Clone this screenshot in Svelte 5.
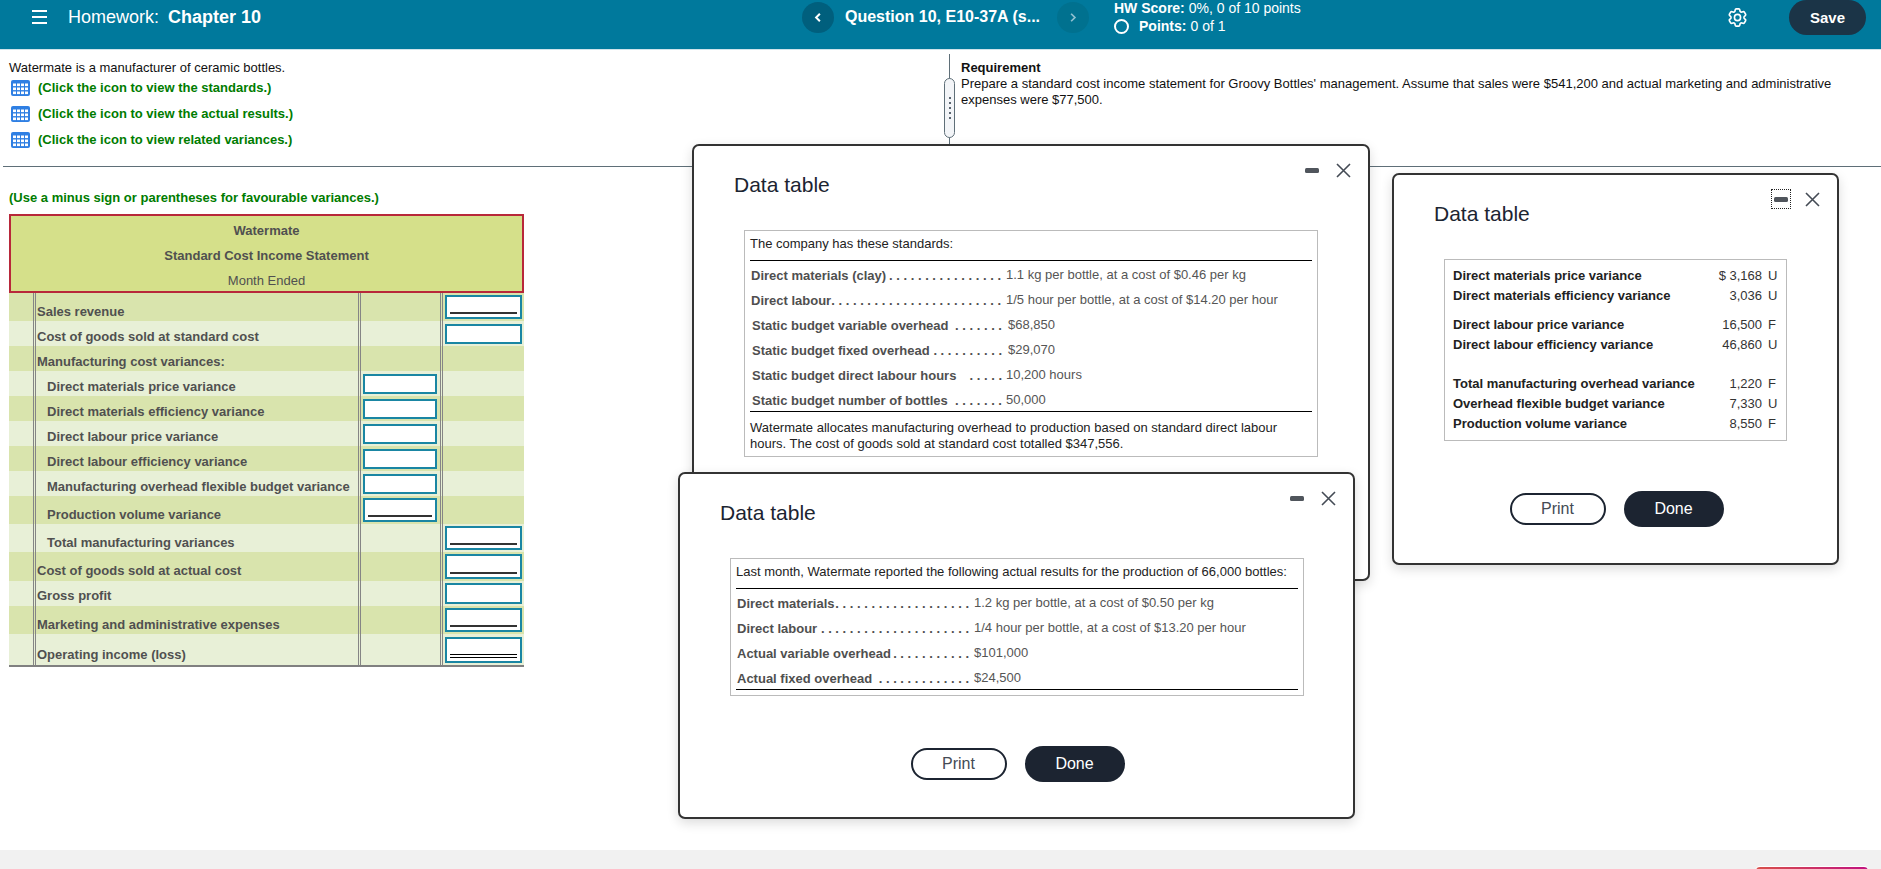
<script>
  const dots = (n) => '. '.repeat(n).trim();

  const rows = [
    { label: 'Sales revenue', h: 'h28', c4: 'i24' },
    { label: 'Cost of goods sold at standard cost', h: 'h25', c4: 'i20' },
    { label: 'Manufacturing cost variances:', h: 'h25' },
    { label: 'Direct materials price variance', h: 'h25', ind: true, c3: 'i20' },
    { label: 'Direct materials efficiency variance', h: 'h25', ind: true, c3: 'i20' },
    { label: 'Direct labour price variance', h: 'h25', ind: true, c3: 'i20' },
    { label: 'Direct labour efficiency variance', h: 'h25', ind: true, c3: 'i20' },
    { label: 'Manufacturing overhead flexible budget variance', h: 'h25', ind: true, c3: 'i20' },
    { label: 'Production volume variance', h: 'h28', ind: true, c3: 'i24' },
    { label: 'Total manufacturing variances', h: 'h28', ind: true, c4: 'i24' },
    { label: 'Cost of goods sold at actual cost', h: 'h29', c4: 'i25' },
    { label: 'Gross profit', h: 'h25', c4: 'i21' },
    { label: 'Marketing and administrative expenses', h: 'h28', c4: 'i24' },
    { label: 'Operating income (loss)', h: 'h31', c4: 'i26' }
  ];

  const standards = [
    ['Direct materials (clay)', 16, '1.1 kg per bottle, at a cost of $0.46 per kg'],
    ['Direct labour', 24, '1/5 hour per bottle, at a cost of $14.20 per hour'],
    ['Static budget variable overhead', 7, '$68,850'],
    ['Static budget fixed overhead', 10, '$29,070'],
    ['Static budget direct labour hours', 5, '10,200 hours'],
    ['Static budget number of bottles', 7, '50,000']
  ];

  const actuals = [
    ['Direct materials', 19, '1.2 kg per bottle, at a cost of $0.50 per kg'],
    ['Direct labour', 21, '1/4 hour per bottle, at a cost of $13.20 per hour'],
    ['Actual variable overhead', 11, '$101,000'],
    ['Actual fixed overhead', 13, '$24,500']
  ];

  const variances = [
    { cls: 'g1', items: [['Direct materials price variance', '$ 3,168', 'U'], ['Direct materials efficiency variance', '3,036', 'U']] },
    { cls: 'g2', items: [['Direct labour price variance', '16,500', 'F'], ['Direct labour efficiency variance', '46,860', 'U']] },
    { cls: 'g3', items: [['Total manufacturing overhead variance', '1,220', 'F'], ['Overhead flexible budget variance', '7,330', 'U'], ['Production volume variance', '8,550', 'F']] }
  ];

  const links = [
    '(Click the icon to view the standards.)',
    '(Click the icon to view the actual results.)',
    '(Click the icon to view related variances.)'
  ];
</script>

{#snippet gridIcon()}
  <svg class="gicon" viewBox="0 0 19 16" aria-hidden="true">
    <rect width="19" height="16" rx="2" fill="#2f7fe3" />
    {#each [3.5, 7.5, 11.5] as y}
      {#each [2, 6, 10, 14] as x}
        <rect {x} {y} width="3" height="2.6" fill="#fff" />
      {/each}
    {/each}
  </svg>
{/snippet}

{#snippet ctl(focus)}
  <div class="ctl">
    <span class="min" class:focus><span class="bar"></span></span>
    <svg class="x" viewBox="0 0 15 15" aria-hidden="true">
      <path d="M1 1l13 13M14 1L1 14" fill="none" stroke="#444b55" stroke-width="1.6" />
    </svg>
  </div>
{/snippet}

{#snippet buttons()}
  <div class="btns">
    <button class="print">Print</button>
    <button class="done">Done</button>
  </div>
{/snippet}

{#snippet leaders(list)}
  <div class="rows">
    {#each list as [label, n, value]}
      <div class="lrow">
        <div class="lead"><b>{label}</b><b class="dots">{dots(n)}</b></div>
        <span class="val">{value}</span>
      </div>
    {/each}
  </div>
{/snippet}

<div class="page">
  <header>
    <div class="burger"><i></i><i></i><i></i></div>
    <div class="title">Homework: <b>Chapter 10</b></div>
    <button class="nav prev" aria-label="Previous">
      <svg viewBox="0 0 8 12"><path d="M5.5 3L2.5 6l3 3" fill="none" stroke="#fff" stroke-width="1.6" /></svg>
    </button>
    <div class="q">Question 10, E10-37A (s...</div>
    <button class="nav next" aria-label="Next">
      <svg viewBox="0 0 8 12"><path d="M2.5 3l3 3-3 3" fill="none" stroke="#8fc0d0" stroke-width="1.4" /></svg>
    </button>
    <div class="score">
      <div><b>HW Score:</b> 0%, 0 of 10 points</div>
      <div class="pts"><span class="ring"></span><b>Points:</b> 0 of 1</div>
    </div>
    <svg class="gear" viewBox="0 0 24 24" aria-hidden="true">
      <path d="M9.594 3.94c.09-.542.56-.94 1.11-.94h2.593c.55 0 1.02.398 1.11.94l.213 1.281c.063.374.313.686.645.87.074.04.147.083.22.127.325.196.72.257 1.075.124l1.217-.456a1.125 1.125 0 0 1 1.37.49l1.296 2.247a1.125 1.125 0 0 1-.26 1.431l-1.003.827c-.293.241-.438.613-.43.992a7.723 7.723 0 0 1 0 .255c-.008.378.137.75.43.991l1.004.827c.424.35.534.955.26 1.43l-1.298 2.247a1.125 1.125 0 0 1-1.369.491l-1.217-.456c-.355-.133-.75-.072-1.076.124a6.47 6.47 0 0 1-.22.128c-.331.183-.581.495-.644.869l-.213 1.281c-.09.543-.56.94-1.11.94h-2.594c-.55 0-1.019-.398-1.11-.94l-.213-1.281c-.062-.374-.312-.686-.644-.87a6.52 6.52 0 0 1-.22-.127c-.325-.196-.72-.257-1.076-.124l-1.217.456a1.125 1.125 0 0 1-1.369-.49l-1.297-2.247a1.125 1.125 0 0 1 .26-1.431l1.004-.827c.292-.24.437-.613.43-.991a6.932 6.932 0 0 1 0-.255c.007-.38-.138-.751-.43-.992l-1.004-.827a1.125 1.125 0 0 1-.26-1.43l1.297-2.247a1.125 1.125 0 0 1 1.37-.491l1.216.456c.356.133.751.072 1.076-.124.072-.044.146-.086.22-.128.332-.183.582-.495.644-.869l.214-1.28Z" fill="none" stroke="#fff" stroke-width="1.7" />
      <circle cx="12" cy="12" r="3.2" fill="none" stroke="#fff" stroke-width="1.7" />
    </svg>
    <button class="save">Save</button>
  </header>

  <section class="top">
    <div class="left">
      <p class="intro">Watermate is a manufacturer of ceramic bottles.</p>
      {#each links as link}
        <div class="link">{@render gridIcon()}<span>{link}</span></div>
      {/each}
    </div>
    <div class="split">
      <div class="handle"><i></i><i></i><i></i><i></i><i></i></div>
    </div>
    <div class="req">
      <b>Requirement</b>
      <p>Prepare a standard cost income statement for Groovy Bottles' management. Assume that sales were $541,200 and actual marketing and administrative expenses were $77,500.</p>
    </div>
  </section>

  <main>
    <p class="hint">(Use a minus sign or parentheses for favourable variances.)</p>
    <div class="sheet">
      <div class="shead">
        <div class="strong">Watermate</div>
        <div class="strong">Standard Cost Income Statement</div>
        <div>Month Ended</div>
      </div>
      {#each rows as r}
        <div class="srow {r.h}">
          <div class="c0"></div>
          <div class="c1" class:ind={r.ind}>{r.label}</div>
          <div class="c2">
            {#if r.c3}
              <div class="inp {r.c3}"><span></span></div>
            {/if}
          </div>
          <div class="c3">
            {#if r.c4}
              <div class="inp {r.c4}"><span></span></div>
            {/if}
          </div>
        </div>
      {/each}
    </div>
  </main>

  <footer></footer>

  <div class="modal ma">
    {@render ctl(false)}
    <h2>Data table</h2>
    <div class="box">
      <div class="hd">The company has these standards:</div>
      {@render leaders(standards)}
      <p class="note">Watermate allocates manufacturing overhead to production based on standard direct labour hours. The cost of goods sold at standard cost totalled $347,556.</p>
    </div>
  </div>

  <div class="modal mb">
    {@render ctl(false)}
    <h2>Data table</h2>
    <div class="box">
      <div class="hd">Last month, Watermate reported the following actual results for the production of 66,000 bottles:</div>
      {@render leaders(actuals)}
    </div>
    {@render buttons()}
  </div>

  <div class="modal mc">
    {@render ctl(true)}
    <h2>Data table</h2>
    <div class="box">
      {#each variances as g}
        <div class={g.cls}>
          {#each g.items as [label, num, flag]}
            <div class="vrow"><b>{label}</b><span class="num">{num}</span><span class="flag">{flag}</span></div>
          {/each}
        </div>
      {/each}
    </div>
    {@render buttons()}
  </div>

  <div class="toast"></div>
</div>

<style>
  :global(body) { margin: 0; font-family: "Liberation Sans", Arial, sans-serif; background: #fff; }
  * { box-sizing: border-box; }
  p { margin: 0; }
  button { font-family: inherit; cursor: pointer; }

  .page { position: relative; height: 100vh; min-height: 869px; display: flex; flex-direction: column; overflow: hidden; font-size: 13px; line-height: 16px; color: #111; }

  header { flex: none; height: 50px; background: #00799c; border-bottom: 1px solid #cfe3ea; display: flex; align-items: flex-start; padding-left: 32px; color: #fff; }
  .burger { width: 15px; margin-top: 10px; display: flex; flex-direction: column; gap: 4px; margin-right: 21px; }
  .burger i { display: block; height: 2px; background: #fff; }
  .title { width: 734px; font-size: 18px; line-height: 34px; white-space: pre; }
  .title b { margin-left: 4px; }
  .nav { width: 32px; height: 31px; margin-top: 2px; border: 0; border-radius: 50%; padding: 0; display: flex; align-items: center; justify-content: center; }
  .nav svg { width: 10px; height: 15px; }
  .prev { background: #005f7d; }
  .next { background: #00718f; }
  .q { width: 223px; padding-left: 11px; font-size: 16px; font-weight: 700; line-height: 34px; white-space: nowrap; }
  .score { margin-left: 25px; margin-top: -1px; font-size: 14px; line-height: 18px; }
  .pts { display: flex; align-items: center; }
  .ring { width: 15px; height: 15px; border: 2px solid #fff; border-radius: 50%; margin-right: 10px; margin-top: 1px; }
  .pts b { margin-right: 4px; }
  .gear { width: 23px; height: 23px; margin-left: auto; margin-top: 6px; }
  .save { width: 77px; height: 35px; margin: 0 15px 0 40px; border: 0; border-radius: 18px; background: #1b3447; color: #fff; font-weight: 700; font-size: 15px; }

  .top { flex: none; height: 117px; margin-left: 3px; display: flex; border-bottom: 1px solid #5f6f78; }
  .left { width: 946px; padding: 10px 0 0 6px; }
  .link { display: flex; align-items: center; height: 16px; margin-top: 10px; color: #007c00; font-weight: 700; }
  .intro + .link { margin-top: 4px; }
  .gicon { width: 19px; height: 16px; margin-left: 2px; margin-right: 8px; flex: none; }
  .split { position: relative; width: 1px; margin-top: 4px; background: #5f6f78; }
  .handle { position: absolute; left: -5px; top: 24px; width: 11px; height: 60px; border: 1px solid #5f6f78; border-radius: 6px; background: #f3f5f8; display: flex; flex-direction: column; align-items: center; justify-content: center; gap: 3px; }
  .handle i { width: 2px; height: 2px; background: #5a6570; }
  .req { flex: 1; padding: 10px 40px 0 11px; }
  .req b { display: block; }

  main { padding: 23px 0 0 9px; }
  .hint { color: #007c00; font-weight: 700; margin-bottom: 8px; }
  .sheet { width: 515px; border-bottom: 2px solid #808080; color: #505050; }
  .shead { height: 79px; border: 2px solid #b8283a; background: #d5e08a; padding-top: 2px; text-align: center; }
  .shead div { height: 25px; line-height: 25px; }
  .strong { font-weight: 700; }

  .srow { display: flex; background: #e8f0d7; font-weight: 700; }
  .srow:nth-child(even) { background: #d9e4ad; }
  .h25 { height: 25px; }
  .h28 { height: 28px; }
  .h29 { height: 29px; }
  .h31 { height: 31px; }
  .c0 { border-right: 3px double #858585; width: 27px; }
  .c1 { width: 322px; padding: 0 0 1px 1px; display: flex; align-items: flex-end; white-space: nowrap; }
  .c1.ind { padding-left: 11px; }
  .h29 .c1, .h31 .c1, .srow:nth-child(13) .c1 { padding-bottom: 2px; }
  .c2, .c3 { border-left: 3px double #858585; display: flex; align-items: center; }
  .c2 { width: 82px; padding-left: 2px; }
  .c3 { flex: 1; padding-left: 2px; }

  .inp { display: flex; flex-direction: column; justify-content: flex-end; background: #fff; border: 2px solid #1a86a3; padding: 0 3px 3px; }
  .c2 .inp { width: 74px; }
  .c3 .inp { width: 77px; }
  .i20 { height: 20px; }
  .i21 { height: 21px; }
  .i24 { height: 24px; }
  .i25 { height: 25px; }
  .i26 { height: 26px; }
  .i24 span, .i25 span { border-bottom: 2px solid #333; }
  .i26 span { border-bottom: 4px double #000; }

  footer { margin-top: auto; height: 19px; background: #f1f1f1; flex: none; }
  .toast { position: absolute; left: 1756px; top: 867px; width: 112px; height: 4px; border-radius: 4px 4px 0 0; background: linear-gradient(90deg, #d8504a, #c0127f); box-shadow: 0 0 0 1px #fff; }

  .modal { position: absolute; background: #fff; border: 2px solid #333; border-radius: 7px; box-shadow: 0 4px 12px rgba(0, 0, 0, 0.14); padding: 27px 0 0 40px; }
  .ma { left: 692px; top: 144px; width: 678px; height: 437px; }
  .mb { left: 678px; top: 472px; width: 677px; height: 347px; }
  .mc { left: 1392px; top: 173px; width: 447px; height: 392px; }
  h2 { margin: 0; font-size: 21px; line-height: 24px; font-weight: 400; color: #1c2431; }
  .ctl { position: absolute; top: 14px; right: 17px; display: flex; align-items: center; gap: 18px; }
  .min { width: 20px; height: 20px; display: flex; align-items: center; justify-content: center; margin-right: -4px; }
  .min.focus { border: 1px dotted #222; }
  .bar { width: 14px; height: 5px; border-radius: 1.5px; background: #50555c; }
  .x { width: 15px; height: 15px; }

  .box { margin: 33px 0 0 10px; border: 1px solid #bbb; padding: 5px; }
  .ma .box { width: 574px; padding-bottom: 4px; }
  .mb .box { width: 574px; }
  .mc .box { width: 343px; padding: 6px 8px 6px; }
  .hd { padding-bottom: 8px; border-bottom: 1px solid #000; color: #222; }
  .rows { padding-top: 7px; border-bottom: 1px solid #000; }
  .lrow { display: flex; height: 25px; }
  .lrow:last-child { height: 18px; }
  .lead { display: flex; justify-content: space-between; margin-left: 1px; color: #4f4f4f; white-space: nowrap; }
  .ma .lead { width: 250px; }
  .mb .lead { width: 232px; }
  .ma .lrow:nth-child(n+3) .lead { margin-left: 2px; }
  .dots { white-space: pre; }
  .val { margin-left: 5px; color: #555; margin-top: -1px; }
  .ma .lrow:nth-child(3) .val, .ma .lrow:nth-child(4) .val { margin-left: 6px; }
  .ma .lrow:nth-child(5) .val, .ma .lrow:nth-child(6) .val { margin-left: 4px; }
  .note { margin-top: 8px; color: #222; }

  .g2 { margin-top: 9px; }
  .g3 { margin-top: 19px; }
  .vrow { display: flex; height: 20px; align-items: center; color: #222; }
  .vrow b { flex: 1; }
  .num { color: #333; }
  .flag { width: 10px; margin-left: 6px; color: #333; }

  .btns { display: flex; align-items: center; justify-content: center; gap: 18px; margin: 50px 0 0 -38px; }
  .print, .done { font-size: 16px; border-radius: 18px; padding: 0; }
  .print { width: 96px; height: 32px; background: #fff; border: 2px solid #1c2431; color: #444b55; }
  .done { width: 100px; height: 36px; background: #1c2431; border: 0; color: #fff; }
</style>
